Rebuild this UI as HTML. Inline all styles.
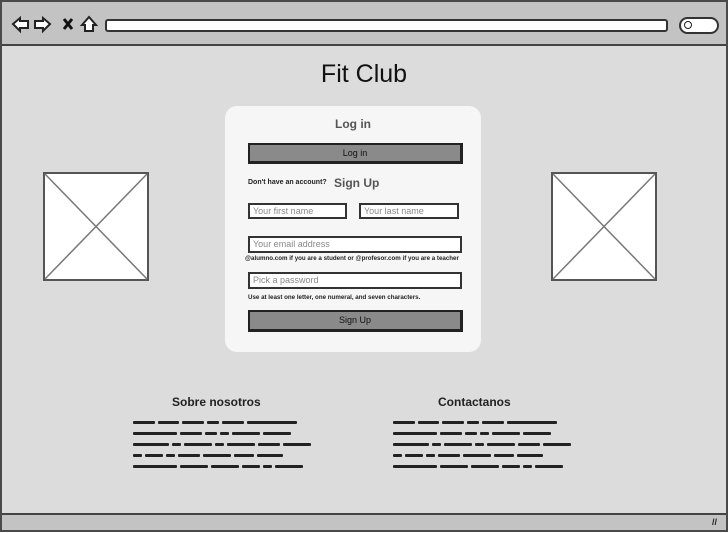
<!DOCTYPE html>
<html><head><meta charset="utf-8"><style>
*{margin:0;padding:0;box-sizing:border-box}
body{width:728px;height:533px;background:#fff;position:relative;overflow:hidden;font-family:"Liberation Sans",sans-serif}
.abs{position:absolute}
.frame{left:0;top:0;width:728px;height:532px;border:2px solid #4a4a4a;background:#dcdcdc}
.tb{left:2px;top:2px;width:724px;height:44px;background:#c3c3c3;border-bottom:2px solid #444}
.url{left:105px;top:19px;width:563px;height:13px;background:#fff;border:2px solid #333;border-radius:3px}
.search{left:679px;top:17px;width:40px;height:17px;background:#fff;border:2px solid #333;border-radius:9px}
.bb{left:2px;top:513px;width:724px;height:17px;background:#c3c3c3;border-top:2px solid #444}
.title{left:0;width:728px;top:60px;text-align:center;font-size:25px;color:#111}
.card{left:225px;top:106px;width:256px;height:246px;background:#f6f6f6;border-radius:12px}
.btn{background:#8a8a8a;border:2px solid #222;border-right-width:3px;border-bottom-width:3px;font-size:9px;text-align:center;color:#111}
.inp{background:#fff;border:2px solid #333;font-size:9px;color:#888;padding-left:3px;line-height:12px}
.small{font-size:7px;color:#222;font-weight:bold;white-space:nowrap}
.ln{height:11px;display:flex;gap:3px;align-items:center}
.ln span{display:block;height:3px;background:#222;border-radius:1px}
.h{font-size:12px;font-weight:bold;color:#222}
</style></head><body>
<div class="abs frame"></div>
<div class="abs tb"></div>
<svg class="abs" style="left:10px;top:14px" width="95" height="22" viewBox="0 0 95 22">
<path d="M3 10 L10 4 L10 7 L18 7 L18 14 L10 14 L10 17 Z" fill="#fff" stroke="#222" stroke-width="2"/>
<path d="M40 10 L33 4 L33 7 L25 7 L25 14 L33 14 L33 17 Z" fill="#fff" stroke="#222" stroke-width="2"/>
<path d="M54 5 L62 15 M62 5 L54 15" stroke="#111" stroke-width="3"/>
<path d="M79 3 L72 11 L75 11 L75 17 L83 17 L83 11 L86 11 Z" fill="#fff" stroke="#222" stroke-width="2"/>
</svg>
<div class="abs url"></div>
<div class="abs search"></div>
<div class="abs" style="left:684px;top:21px;width:8px;height:8px;border:1.5px solid #222;border-radius:50%"></div>
<div class="abs bb"></div>
<div class="abs" style="left:712px;top:517px;font-size:9px;font-weight:bold;color:#222">//</div>
<div class="abs title">Fit Club</div>
<svg class="abs" style="left:43px;top:172px" width="106" height="109"><rect x="1" y="1" width="104" height="107" fill="#fff" stroke="#555" stroke-width="2"/><path d="M2 2 L104 107 M104 2 L2 107" stroke="#777" stroke-width="1.5"/></svg>
<svg class="abs" style="left:551px;top:172px" width="106" height="109"><rect x="1" y="1" width="104" height="107" fill="#fff" stroke="#555" stroke-width="2"/><path d="M2 2 L104 107 M104 2 L2 107" stroke="#777" stroke-width="1.5"/></svg>
<div class="abs card"></div>
<div class="abs" style="left:225px;width:256px;top:117px;text-align:center;font-size:12px;font-weight:bold;color:#555">Log in</div>
<div class="abs btn" style="left:248px;top:143px;width:215px;height:21px;line-height:16px">Log in</div>
<div class="abs small" style="left:248px;top:179px">Don't have an account?</div>
<div class="abs" style="left:334px;top:176px;font-size:12px;font-weight:bold;color:#555">Sign Up</div>
<div class="abs inp" style="left:248px;top:203px;width:99px;height:16px">Your first name</div>
<div class="abs inp" style="left:359px;top:203px;width:100px;height:16px">Your last name</div>
<div class="abs inp" style="left:248px;top:236px;width:214px;height:17px">Your email address</div>
<div class="abs small" style="left:245px;top:255px;font-size:6.2px">@alumno.com if you are a student or @profesor.com if you are a teacher</div>
<div class="abs inp" style="left:248px;top:272px;width:214px;height:17px">Pick a password</div>
<div class="abs small" style="left:248px;top:294px;font-size:6.2px">Use at least one letter, one numeral, and seven characters.</div>
<div class="abs btn" style="left:248px;top:310px;width:215px;height:22px;line-height:17px">Sign Up</div>
<div class="abs h" style="left:172px;top:395px">Sobre nosotros</div>
<div class="abs h" style="left:438px;top:395px">Contactanos</div>
<div class="abs" style="left:133px;top:417px">
<div class="ln"><span style="width:22px"></span><span style="width:21px"></span><span style="width:22px"></span><span style="width:12px"></span><span style="width:22px"></span><span style="width:50px"></span></div>
<div class="ln"><span style="width:44px"></span><span style="width:22px"></span><span style="width:12px"></span><span style="width:9px"></span><span style="width:28px"></span><span style="width:28px"></span></div>
<div class="ln"><span style="width:36px"></span><span style="width:9px"></span><span style="width:28px"></span><span style="width:9px"></span><span style="width:28px"></span><span style="width:22px"></span><span style="width:28px"></span></div>
<div class="ln"><span style="width:9px"></span><span style="width:18px"></span><span style="width:9px"></span><span style="width:22px"></span><span style="width:28px"></span><span style="width:20px"></span><span style="width:26px"></span></div>
<div class="ln"><span style="width:44px"></span><span style="width:28px"></span><span style="width:28px"></span><span style="width:18px"></span><span style="width:9px"></span><span style="width:28px"></span></div>
</div>
<div class="abs" style="left:393px;top:417px">
<div class="ln"><span style="width:22px"></span><span style="width:21px"></span><span style="width:22px"></span><span style="width:12px"></span><span style="width:22px"></span><span style="width:50px"></span></div>
<div class="ln"><span style="width:44px"></span><span style="width:22px"></span><span style="width:12px"></span><span style="width:9px"></span><span style="width:28px"></span><span style="width:28px"></span></div>
<div class="ln"><span style="width:36px"></span><span style="width:9px"></span><span style="width:28px"></span><span style="width:9px"></span><span style="width:28px"></span><span style="width:22px"></span><span style="width:28px"></span></div>
<div class="ln"><span style="width:9px"></span><span style="width:18px"></span><span style="width:9px"></span><span style="width:22px"></span><span style="width:28px"></span><span style="width:20px"></span><span style="width:26px"></span></div>
<div class="ln"><span style="width:44px"></span><span style="width:28px"></span><span style="width:28px"></span><span style="width:18px"></span><span style="width:9px"></span><span style="width:28px"></span></div>
</div>
</body></html>
